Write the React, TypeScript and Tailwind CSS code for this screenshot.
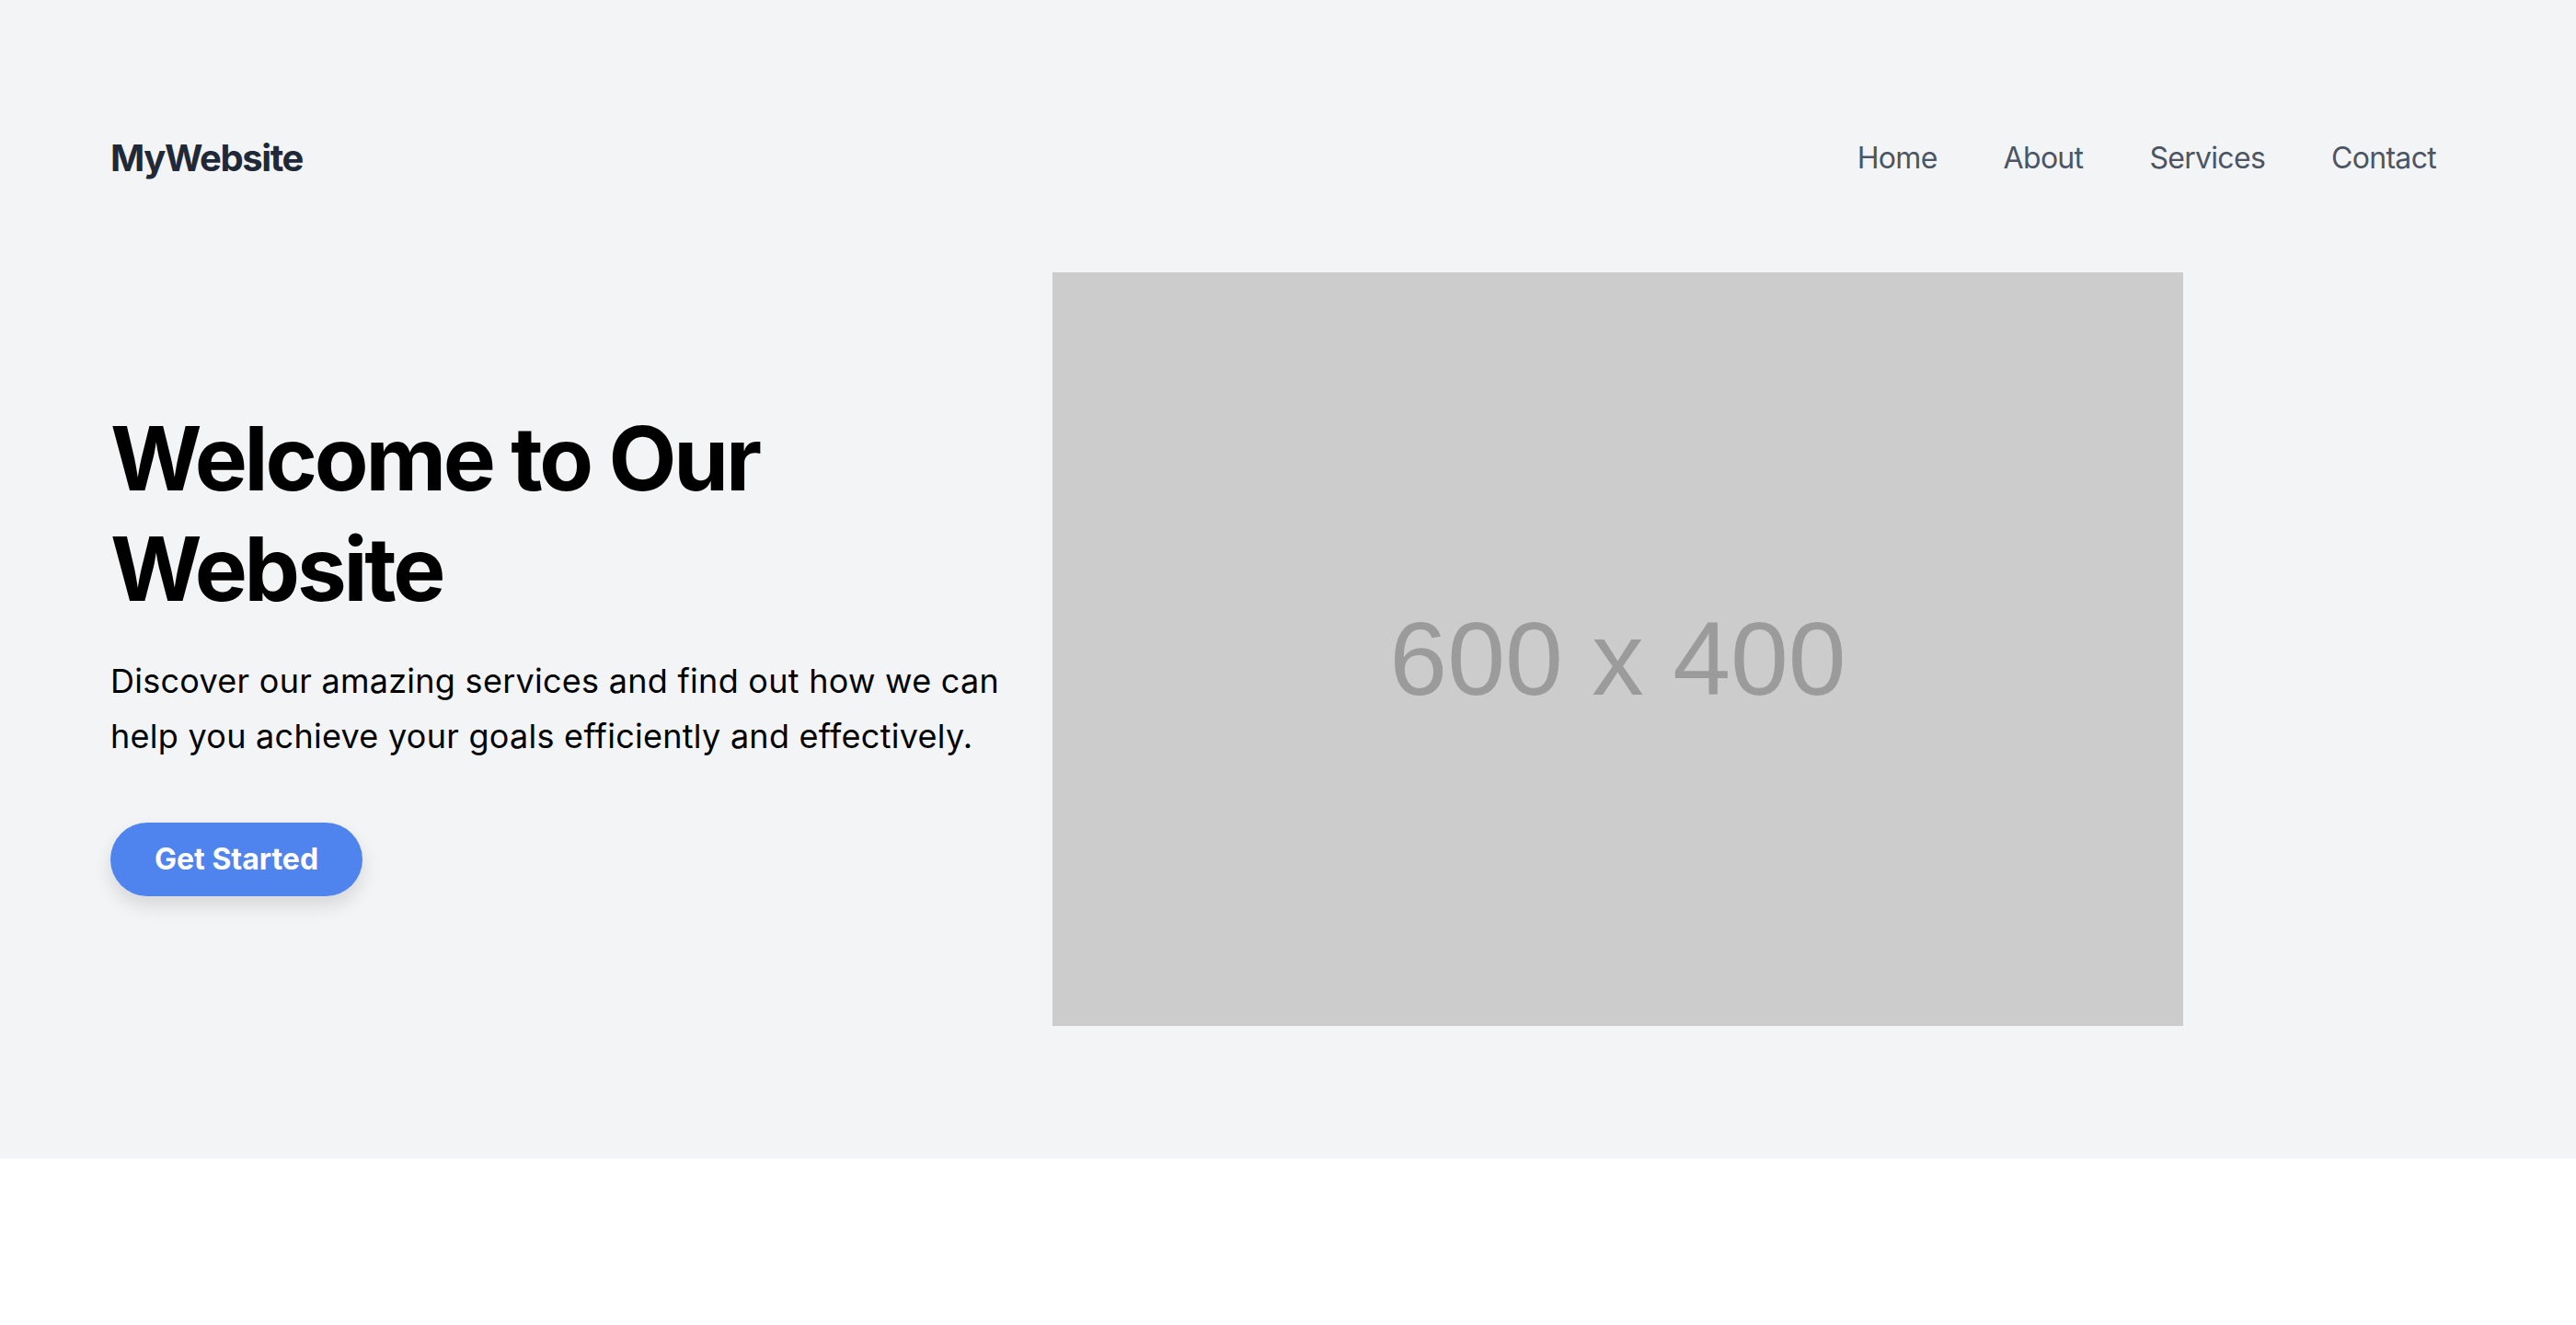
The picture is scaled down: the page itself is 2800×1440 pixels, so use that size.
import React from "react";

export default function App() {
  return (
    <div className="min-h-screen bg-white" style={{ fontFamily: "Inter, 'Noto Sans', sans-serif" }}>
      <div className="bg-[#f3f4f6]">
        <header className="flex items-center justify-between pl-[120px] pr-[120px] pt-[144px]">
          <div className="text-[40px] leading-[56px] font-bold tracking-[-1.4px] text-[#1f2937]">MyWebsite</div>
          <nav className="flex items-center gap-[8px]">
            {["Home", "About", "Services", "Contact"].map((l) => (
              <a key={l} href="#" className="px-[32px] text-[32px] leading-[48px] tracking-[-0.7px] text-[#4b5563]">
                {l}
              </a>
            ))}
          </nav>
        </header>
        <section className="flex items-center gap-[48px] px-[120px] pt-[96px] pb-[144px]">
          <div className="w-[976px] shrink-0">
            <h1 className="mb-[32px] text-[96px] leading-[120px] font-bold tracking-[-3.2px] text-black">
              Welcome to Our Website
            </h1>
            <p className="mb-[64px] text-[36px] leading-[60px] tracking-[0.27px] text-black">
              Discover our amazing services and find out how we can help you achieve your goals efficiently and effectively.
            </p>
            <button className="rounded-full bg-[#4f83ee] px-[48px] py-[16px] text-[32px] leading-[48px] font-bold text-white shadow-[0_10px_20px_rgba(0,0,0,0.12)]">
              Get Started
            </button>
          </div>
          <div className="flex h-[819px] w-[1229px] shrink-0 items-center justify-center bg-[#cccccc]">
            <span
              className="pt-[22px] text-[113px] text-[#9b9b9b]"
              style={{ fontFamily: "'Liberation Sans', Arial, sans-serif" }}
            >
              600 x 400
            </span>
          </div>
        </section>
      </div>
    </div>
  );
}
